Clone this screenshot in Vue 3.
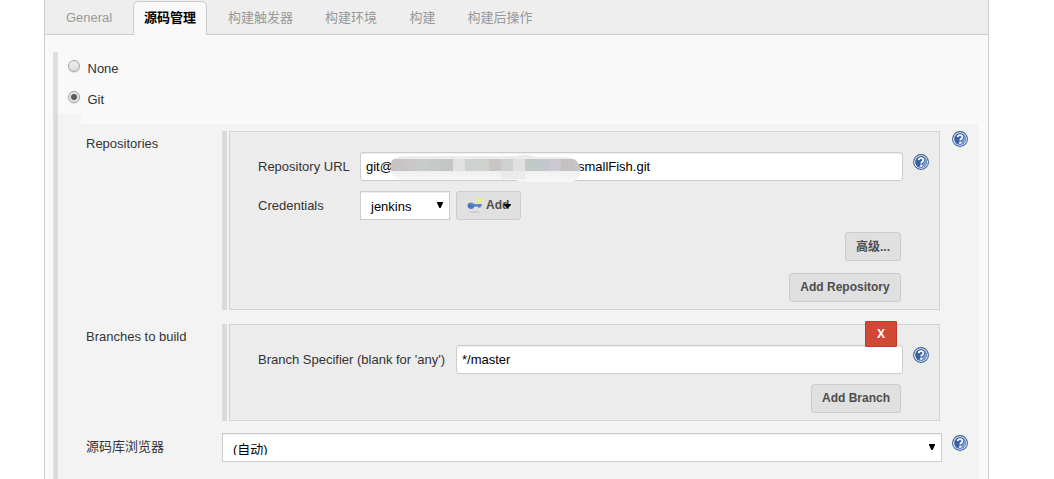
<script setup>
import { h } from 'vue'

const tabs = [
  { label: 'General', width: 88 },
  { label: '源码管理', width: 74, active: true },
  { label: '构建触发器', width: 107 },
  { label: '构建环境', width: 74 },
  { label: '构建', width: 69 },
  { label: '构建后操作', width: 86 },
]

const mosaic = [
  [390, 15, '#c5c3c4'], [405, 12, '#c9c6c6'], [417, 12, '#c6cbcc'], [429, 12, '#c5c9c5'],
  [441, 12, '#c6c5c5'], [453, 12, '#e0e2e1'], [465, 24, '#cdd2ce'],
  [489, 12, '#c9c5c4'], [501, 12, '#cdd1cf'], [513, 12, '#e1e1e0'], [525, 14, '#bfc9c6'],
  [539, 10, '#c2c8cd'], [549, 12, '#cec8d0'], [561, 12, '#c3c2c1'], [573, 12, '#c6c5c6'],
]

const HelpIcon = () =>
  h('svg', { width: 16, height: 16, viewBox: '0 0 16 16' }, [
    h('circle', { cx: 8, cy: 8, r: 7.4, fill: '#fff', stroke: '#3f6099', 'stroke-width': 1.1 }),
    h('circle', { cx: 8, cy: 8, r: 5.9, fill: '#3a609f' }),
    h('path', { d: 'M13.9 8A5.9 5.9 0 0 1 5 13Q11 11 12.8 4.6Q13.9 6.5 13.9 8Z', fill: '#7d9dcc' }),
    h('path', { d: 'M5.6 6.2Q5.8 4.1 8.1 4.1Q10.4 4.1 10.4 6Q10.4 7.1 9.2 7.8Q8.2 8.4 8.2 9.5', fill: 'none', stroke: '#fff', 'stroke-width': 1.8 }),
    h('rect', { x: 7.2, y: 10.7, width: 2, height: 1.9, fill: '#fff' }),
  ])
</script>

<template>
  <main class="panel">
    <nav class="tabs">
      <a v-for="t in tabs" :key="t.label" class="tab" :class="{ active: t.active }" :style="{ width: t.width + 'px' }">{{ t.label }}</a>
    </nav>
    <section class="scm">
      <div class="scm-bar"></div>
      <label class="choice"><span class="radio"></span>None</label>
      <label class="choice second"><span class="radio on"></span>Git</label>

      <div class="settings">
        <div class="row repos">
          <div class="label">Repositories</div>
          <div class="handle"></div>
          <div class="box">
            <div class="field">
              <span class="name url-name">Repository URL</span>
              <div class="input url">
                <span>git@</span><span>smallFish.git</span>
                <svg class="mask" width="192" height="32" viewBox="390 151 192 32">
                  <defs>
                    <clipPath id="brush">
                      <path d="M391 165Q390 158 402 156H516Q525 153 538 157H566Q577 158 580 166Q583 182 567 182H536Q522 182 515 180H401Q390 178 391 165Z" />
                    </clipPath>
                    <linearGradient id="fade" x1="0" y1="0" x2="0" y2="1">
                      <stop offset="0" stop-color="#efefef" />
                      <stop offset="1" stop-color="#f9f9f9" />
                    </linearGradient>
                  </defs>
                  <g clip-path="url(#brush)" shape-rendering="crispEdges">
                    <rect x="390" y="151" width="192" height="8" fill="#ececec" />
                    <rect x="390" y="171" width="192" height="12" fill="url(#fade)" />
                    <rect x="501" y="171" width="24" height="8" fill="#ebebeb" />
                    <rect v-for="m in mosaic" :key="m[0]" :x="m[0]" y="159" :width="m[1]" height="12" :fill="m[2]" />
                  </g>
                </svg>
              </div>
              <HelpIcon class="help" />
            </div>
            <div class="field credentials">
              <span class="name url-name">Credentials</span>
              <div class="select cred"><span>jenkins</span><i class="arrow"></i></div>
              <button class="btn add">
                <svg width="16" height="16" viewBox="0 0 16 16">
                  <ellipse cx="7.5" cy="15" rx="5.5" ry=".8" fill="#c8c8c8" />
                  <rect x="9.6" y="1" width="4.4" height="4.4" rx="1.3" fill="#f3ea55" />
                  <circle cx="11.8" cy="3.2" r=".9" fill="#fffbc0" />
                  <path d="M.6 8.6Q.6 5.4 4 5.4Q6.3 5.4 7.3 7H14.6V9.2H13.6V10.4H11V9.4H7.5Q6.6 12 4 12Q.6 12 .6 8.6Z" fill="#4c7dbd" />
                  <path d="M2 7.6Q3 6.4 5 6.6Q6.4 7 7 7.8H13.6" fill="none" stroke="#6c98d2" stroke-width=".9" />
                  <circle cx="2.6" cy="9" r=".8" fill="#335b91" />
                </svg>
                <span>Add</span>
                <svg class="caret" width="8" height="6" viewBox="0 0 8 6"><path d="M0 1H7V2L4 5H3L0 2Z" fill="#000" /></svg>
              </button>
            </div>
            <button class="btn advanced">高级...</button>
            <button class="btn add-repo">Add Repository</button>
          </div>
          <HelpIcon class="outer-help" />
        </div>

        <div class="row branches">
          <div class="label">Branches to build</div>
          <div class="handle"></div>
          <div class="box">
            <button class="delete">X</button>
            <div class="field">
              <span class="name branch-name">Branch Specifier (blank for 'any')</span>
              <div class="input branch">*/master</div>
              <HelpIcon class="help" />
            </div>
            <button class="btn add-branch">Add Branch</button>
          </div>
        </div>

        <div class="row browser">
          <div class="label">源码库浏览器</div>
          <div class="select auto"><span>(自动)</span><i class="arrow"></i></div>
          <HelpIcon class="outer-help" />
        </div>
      </div>
    </section>
  </main>
</template>

<style>
html, body { background: #fff; overflow: hidden; }
</style>

<style scoped>
* { box-sizing: border-box; }
.panel {
  width: 945px; height: 479px; margin-left: 44px; overflow: hidden;
  border: solid #ccc; border-width: 0 1px; background: #f9f9f9; color: #333;
  font: 13px/18px "Liberation Sans", "Noto Sans CJK SC", sans-serif;
}
.tabs { display: flex; height: 35px; padding-top: 1px; background: #eee; border-bottom: 1px solid #ccc; }
.tab { height: 34px; line-height: 33px; text-align: center; color: #999; }
.tab.active {
  line-height: 31px; font-weight: bold; color: #000; background: #f9f9f9;
  border: 1px solid #ccc; border-bottom: 0; border-radius: 5px 5px 0 0;
}
.scm { position: relative; margin: 17px 0 0 8px; height: 427px; padding-top: 6px; }
.scm-bar { position: absolute; left: 0; top: 0; width: 5px; height: 427px; background: rgba(0, 0, 0, .1); }
.choice { display: flex; height: 20px; padding-left: 15px; line-height: 21px; }
.choice.second { margin-top: 11px; }
.radio {
  width: 12px; height: 12px; margin: 2px 7.5px 0 0; border: 1px solid #a3a3a3; border-radius: 50%;
  background: linear-gradient(#eee, #ddd); box-shadow: 0 1px 1px #ddd;
}
.radio.on { background: radial-gradient(circle, #5c5c5c 2.5px, #e5e5e5 3.6px); }
.settings {
  margin: 5px 0 0 2px; width: 923px; height: 365px; padding-top: 17px;
  background: linear-gradient(#f3f3f3, #f3f3f3) 0 0 / 26px 10px no-repeat,
    linear-gradient(#f3f3f3, #f3f3f3) 0 10px / 100% 355px no-repeat;
}
.row { display: flex; }
.repos { height: 179px; }
.branches { height: 97px; margin-top: 14px; }
.browser { height: 29px; margin-top: 12px; }
.label { width: 167px; padding: 4px 0 0 31px; }
.browser .label { padding-top: 5px; }
.handle { width: 5px; margin-right: 2px; background: #dadada; }
.box { position: relative; width: 711px; padding: 20px 10px 0 28px; border: 1px solid #d3d3d3; background: #ececec; display: flex; flex-direction: column; }
.field { display: flex; height: 29px; flex: none; }
.name { line-height: 29px; }
.url-name { width: 102px; }
.branch-name { width: 198px; white-space: nowrap; }
.input { position: relative; height: 29px; padding: 0 5px; line-height: 27px; color: #000; background: #fff; border: 1px solid #ccc; border-radius: 3px; box-shadow: inset 0 1px 1px rgba(0, 0, 0, .07); }
.url { display: flex; width: 543px; gap: 185px; }
.branch { width: 447px; }
.mask { position: absolute; left: 29px; top: -2px; }
.help { margin: 2px 0 0 10px; }
.outer-help { margin: 0 0 0 12px; }
.browser .outer-help { margin: 2px 0 0 10px; }
.credentials { margin-top: 10px; }
.select { display: flex; justify-content: space-between; height: 29px; padding: 0 6px 0 10px; line-height: 29px; color: #000; background: #fff; border: 1px solid #ccc; box-shadow: inset 0 1px 1px rgba(0, 0, 0, .07); }
.cred { width: 90px; margin-right: 6px; }
.auto { width: 720px; }
.auto span { height: 21px; overflow: hidden; line-height: 32px; }
.arrow { width: 6px; height: 6px; margin-top: 10px; background: #000; clip-path: polygon(0 0, 100% 0, 100% 17%, 60% 100%, 40% 100%, 0 17%); }
.btn { flex: none; height: 29px; padding: 0 0 1px; font: bold 12px/26px "Liberation Sans", "Noto Sans CJK SC", sans-serif; color: #4d4d4d; background: #e0e0e0; border: 1px solid #ccc; border-radius: 3px; white-space: nowrap; }
.add { position: relative; display: flex; width: 65px; padding: 0 0 0 10px; }
.add > svg:first-child { margin: 5px 3px 0 0; }
.add .caret { position: absolute; left: 47px; top: 11px; }
.advanced { width: 56px; margin: 12px 28px 0 0; align-self: flex-end; padding-bottom: 0; }
.add-repo { width: 112px; margin: 12px 28px 0 0; align-self: flex-end; line-height: 24px; padding-bottom: 2px; }
.add-branch { width: 90px; margin: 10px 28px 0 0; align-self: flex-end; line-height: 24px; padding-bottom: 2px; }
.delete { position: absolute; z-index: 1; left: 635px; top: -4px; width: 32px; height: 26px; padding: 0; font: bold 12px/24px "Liberation Sans", sans-serif; color: #fff; background: #d14836; border: 1px solid #b83d30; border-radius: 1px; }
</style>
